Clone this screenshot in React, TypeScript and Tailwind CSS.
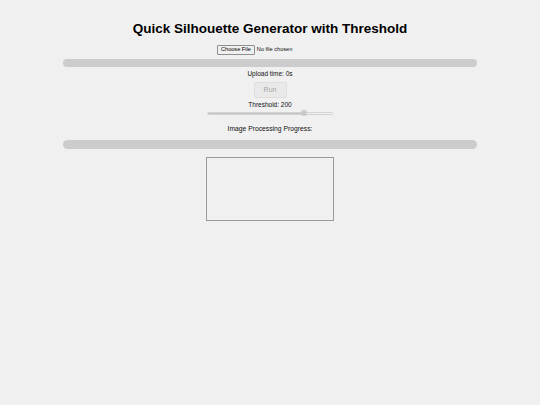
export default function App() {
  return (
    <div className="min-h-screen w-full bg-[#f0f0f0] flex flex-col items-center text-[#111]" style={{ fontFamily: '"Liberation Sans", Arial, sans-serif' }}>
      <h1 className="mt-[21px] text-[13.5px] leading-[16px] font-bold text-black">Quick Silhouette Generator with Threshold</h1>
      <div className="mt-[8px] w-[106px] h-[10px] flex items-center">
        <span className="h-[10px] px-[3px] flex items-center border border-[#8f8f8f] rounded-[1px] bg-[#efefef] text-[5.6px] leading-none text-black">Choose File</span>
        <span className="ml-[2px] text-[5.6px] leading-none">No file chosen</span>
      </div>
      <div className="mt-[4px] w-[414px] h-[8px] rounded-full bg-[#cccccc]" />
      <div className="mt-[3px] text-[6.5px] leading-[8px]">Upload time: 0s</div>
      <div className="mt-[4px] w-[33px] h-[16px] flex items-center justify-center border border-[#dedede] rounded-[2px] bg-[#e9e9e9] text-[7px] text-[#a5a5a5]">Run</div>
      <div className="mt-[3px] text-[6.5px] leading-[8px]">Threshold: 200</div>
      <div className="mt-[1px] relative w-[126px] h-[6px] flex items-center">
        <div className="w-full h-[3px] rounded-full bg-[#efefef] border border-[#d4d4d4] flex">
          <div className="w-[98px] h-full rounded-full bg-[#c2c2c2]" />
        </div>
        <div className="absolute left-[94px] top-0 w-[6px] h-[6px] rounded-full bg-[#c9c9c9]" />
      </div>
      <div className="mt-[9px] text-[6.75px] leading-[8px]">Image Processing Progress:</div>
      <div className="mt-[7px] w-[414px] h-[8.5px] rounded-full bg-[#cccccc]" />
      <div className="mt-[8px] w-[128px] h-[64px] border border-[#9a9a9a]" />
    </div>
  );
}
